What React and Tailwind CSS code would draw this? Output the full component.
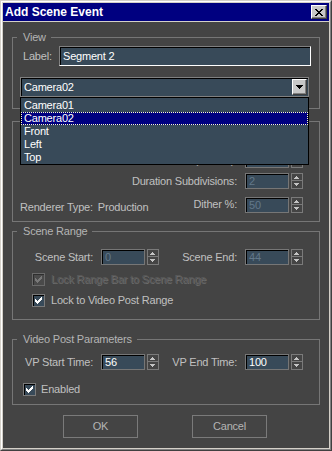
import React from 'react';

const CAMERAS = ['Camera01', 'Camera02', 'Front', 'Left', 'Top'];

const CloseGlyph = () => (
  <svg width="8" height="7" viewBox="0 0 8 7" shapeRendering="crispEdges" fill="#000">
    <rect x="0" y="0" width="2" height="1" />
    <rect x="6" y="0" width="2" height="1" />
    <rect x="1" y="1" width="2" height="1" />
    <rect x="5" y="1" width="2" height="1" />
    <rect x="2" y="2" width="4" height="1" />
    <rect x="3" y="3" width="2" height="1" />
    <rect x="2" y="4" width="4" height="1" />
    <rect x="1" y="5" width="2" height="1" />
    <rect x="5" y="5" width="2" height="1" />
    <rect x="0" y="6" width="2" height="1" />
    <rect x="6" y="6" width="2" height="1" />
  </svg>
);

const Check = ({ color }) => (
  <svg width="7" height="7" viewBox="0 0 7 7" shapeRendering="crispEdges" fill={color}>
    <rect x="6" y="0" width="1" height="1" />
    <rect x="5" y="1" width="2" height="1" />
    <rect x="0" y="2" width="1" height="1" />
    <rect x="4" y="2" width="3" height="1" />
    <rect x="0" y="3" width="2" height="1" />
    <rect x="3" y="3" width="3" height="1" />
    <rect x="0" y="4" width="5" height="1" />
    <rect x="1" y="5" width="3" height="1" />
    <rect x="2" y="6" width="1" height="1" />
  </svg>
);

const CheckBox = ({ disabled }) => (
  <div
    className={
      disabled
        ? 'w-[13px] h-[13px] shrink-0 border border-[#6a6a6a] bg-[#4a4a4a] shadow-[inset_1px_1px_0_#2e2e2e] flex items-center justify-center'
        : 'w-[13px] h-[13px] shrink-0 border border-[#7a7a7a] bg-[#384a59] shadow-[inset_1px_1px_0_#000] flex items-center justify-center'
    }
  >
    <Check color={disabled ? '#787878' : '#ffffff'} />
  </div>
);

const Spinner = () => (
  <div className="w-[12px] h-[16px] ml-[2px] border border-[#7a7a7a] flex items-center justify-center">
    <svg width="10" height="14" viewBox="0 0 10 14" shapeRendering="crispEdges" fill="#c4c4c4">
      <rect x="4" y="2" width="1" height="1" />
      <rect x="3" y="3" width="3" height="1" />
      <rect x="2" y="4" width="5" height="1" />
      <rect x="0" y="6" width="10" height="1" fill="#7a7a7a" />
      <rect x="2" y="9" width="5" height="1" />
      <rect x="3" y="10" width="3" height="1" />
      <rect x="4" y="11" width="1" height="1" />
    </svg>
  </div>
);

const Field = ({ value, disabled }) => (
  <div
    className={`w-[44px] h-[16px] border border-[#767676] bg-[#384a59] shadow-[inset_1px_1px_0_#000] pl-[3px] leading-[14px] ${
      disabled ? 'text-[#62788a]' : 'text-white'
    }`}
  >
    {value}
  </div>
);

const SpinBlock = ({ label, value, disabled, labelClass }) => (
  <div className="flex items-center">
    <span className={labelClass}>{label}</span>
    <Field value={value} disabled={disabled} />
    <Spinner />
  </div>
);

const Group = ({ title, className, children }) => (
  <div className={`relative shrink-0 border border-[#767676] ${className}`}>
    {title && (
      <span className="absolute -top-[8px] left-[4px] pl-[6px] pr-[5px] bg-[#444444] leading-[15px] text-[#b4b4b4]">
        {title}
      </span>
    )}
    {children}
  </div>
);

const RaisedButton = ({ className, children }) => (
  <div
    className={`bg-[#c8c8c8] border border-t-white border-l-white border-r-[#404040] border-b-[#404040] shadow-[inset_-1px_-1px_0_#808080] flex items-center justify-center ${className}`}
  >
    {children}
  </div>
);

export default function App() {
  return (
    <div className="w-[332px] h-[451px] border border-t-[#d4d0c8] border-l-[#d4d0c8] border-r-[#404040] border-b-[#404040] font-['Liberation_Sans',Arial,sans-serif] text-[11px] tracking-[-0.2px] leading-[15px]">
      <div className="h-full border border-t-white border-l-white border-r-[#808080] border-b-[#808080]">
        <div className="h-full border border-[#d4d0c8] bg-[#444444] flex flex-col">
          {/* title bar */}
          <div className="h-[18px] shrink-0 bg-[#000080] flex items-center justify-between pl-[2px] pr-[2px]">
            <span className="font-bold text-[12px] tracking-normal leading-[18px] text-white">Add Scene Event</span>
            <RaisedButton className="w-[16px] h-[14px]">
              <CloseGlyph />
            </RaisedButton>
          </div>
          <div className="h-[1px] shrink-0 bg-[#d4d0c8]" />

          <div className="flex-1 flex flex-col px-[9px] text-[#c0c0c0]">
            {/* View */}
            <Group title="View" className="mt-[15px] h-[72px]">
              <div className="flex items-center mt-[8px] pl-[10px] pr-[8px]">
                <span className="w-[36px]">Label:</span>
                <div className="flex-1 h-[20px] border border-t-[#808080] border-l-[#808080] border-r-white border-b-white bg-[#384a59] shadow-[inset_1px_1px_0_#000] pl-[3px] leading-[18px] text-white">
                  Segment 2
                </div>
              </div>
              <div className="relative mt-[11px] ml-[7px] mr-[10px]">
                <div className="h-[20px] border border-[#808080] bg-[#384a59] shadow-[inset_1px_1px_0_#000] flex items-center pl-[3px] pr-[1px] text-white">
                  <span className="flex-1">Camera02</span>
                  <RaisedButton className="w-[15px] h-[16px]">
                    <svg width="7" height="4" viewBox="0 0 7 4" shapeRendering="crispEdges" fill="#000">
                      <rect x="0" y="0" width="7" height="1" />
                      <rect x="1" y="1" width="5" height="1" />
                      <rect x="2" y="2" width="3" height="1" />
                      <rect x="3" y="3" width="1" height="1" />
                    </svg>
                  </RaisedButton>
                </div>
                <div className="absolute left-0 right-0 top-full z-10 border border-black bg-[#384a59] pt-[1px] text-white">
                  {CAMERAS.map((cam) => (
                    <div
                      key={cam}
                      className={
                        cam === 'Camera02'
                          ? 'h-[13px] leading-[11px] pl-[2px] bg-[#000080] border border-dotted border-[#ffffc8]'
                          : 'h-[13px] leading-[13px] pl-[3px]'
                      }
                    >
                      {cam}
                    </div>
                  ))}
                </div>
              </div>
            </Group>

            {/* Scene options (mostly under the open list) */}
            <Group className="mt-[12px] h-[101px] pt-[9px] flex flex-col gap-[5px]">
              <div className="h-[16px] flex items-center justify-between pl-[12px] pr-[16px] leading-[13px]">
                <div className="flex items-center">
                  <CheckBox />
                  <span className="ml-[6px]">Scene Motion Blur</span>
                </div>
                <div className="h-[16px] px-[8px] border border-[#7a7a7a] leading-[14px]">Render Options...</div>
              </div>
              <div className="flex justify-end pr-[16px]">
                <SpinBlock label="Duration (frames):" value="0.5" disabled labelClass="mr-[8px]" />
              </div>
              <div className="flex justify-end pr-[16px]">
                <SpinBlock label="Duration Subdivisions:" value="2" disabled labelClass="mr-[8px]" />
              </div>
              <div className="flex items-center justify-between pl-[7px] pr-[16px]">
                <span className="mt-[6px]">
                  Renderer Type:<span className="ml-[5px]">Production</span>
                </span>
                <SpinBlock label="Dither %:" value="50" disabled labelClass="mr-[8px]" />
              </div>
            </Group>

            {/* Scene Range */}
            <Group title="Scene Range" className="mt-[9px] h-[89px] pt-[17px]">
              <div className="flex items-center">
                <SpinBlock label="Scene Start:" value="0" disabled labelClass="w-[80px] text-right mr-[8px]" />
                <SpinBlock label="Scene End:" value="44" disabled labelClass="w-[78px] text-right mr-[8px]" />
              </div>
              <div className="flex items-center mt-[8px] ml-[19px] leading-[13px]">
                <CheckBox disabled />
                <span className="ml-[6px] text-[#5a5a5a] [text-shadow:1px_1px_0_#6c6c6c]">
                  Lock Range Bar to Scene Range
                </span>
              </div>
              <div className="flex items-center mt-[8px] ml-[19px] leading-[13px]">
                <CheckBox />
                <span className="ml-[6px]">Lock to Video Post Range</span>
              </div>
            </Group>

            {/* Video Post Parameters */}
            <Group title="Video Post Parameters" className="mt-[19px] h-[66px] pt-[14px]">
              <div className="flex items-center">
                <SpinBlock label="VP Start Time:" value="56" labelClass="w-[80px] text-right mr-[8px]" />
                <SpinBlock label="VP End Time:" value="100" labelClass="w-[78px] text-right mr-[8px]" />
              </div>
              <div className="flex items-center mt-[13px] ml-[10px] leading-[13px]">
                <CheckBox />
                <span className="ml-[5px]">Enabled</span>
              </div>
            </Group>

            <div className="flex mt-[10px] pl-[51px] gap-[54px] text-[#b4b4b4]">
              <div className="w-[75px] h-[23px] border border-[#7a7a7a] flex items-center justify-center">OK</div>
              <div className="w-[75px] h-[23px] border border-[#7a7a7a] flex items-center justify-center">Cancel</div>
            </div>
          </div>
        </div>
      </div>
    </div>
  );
}
